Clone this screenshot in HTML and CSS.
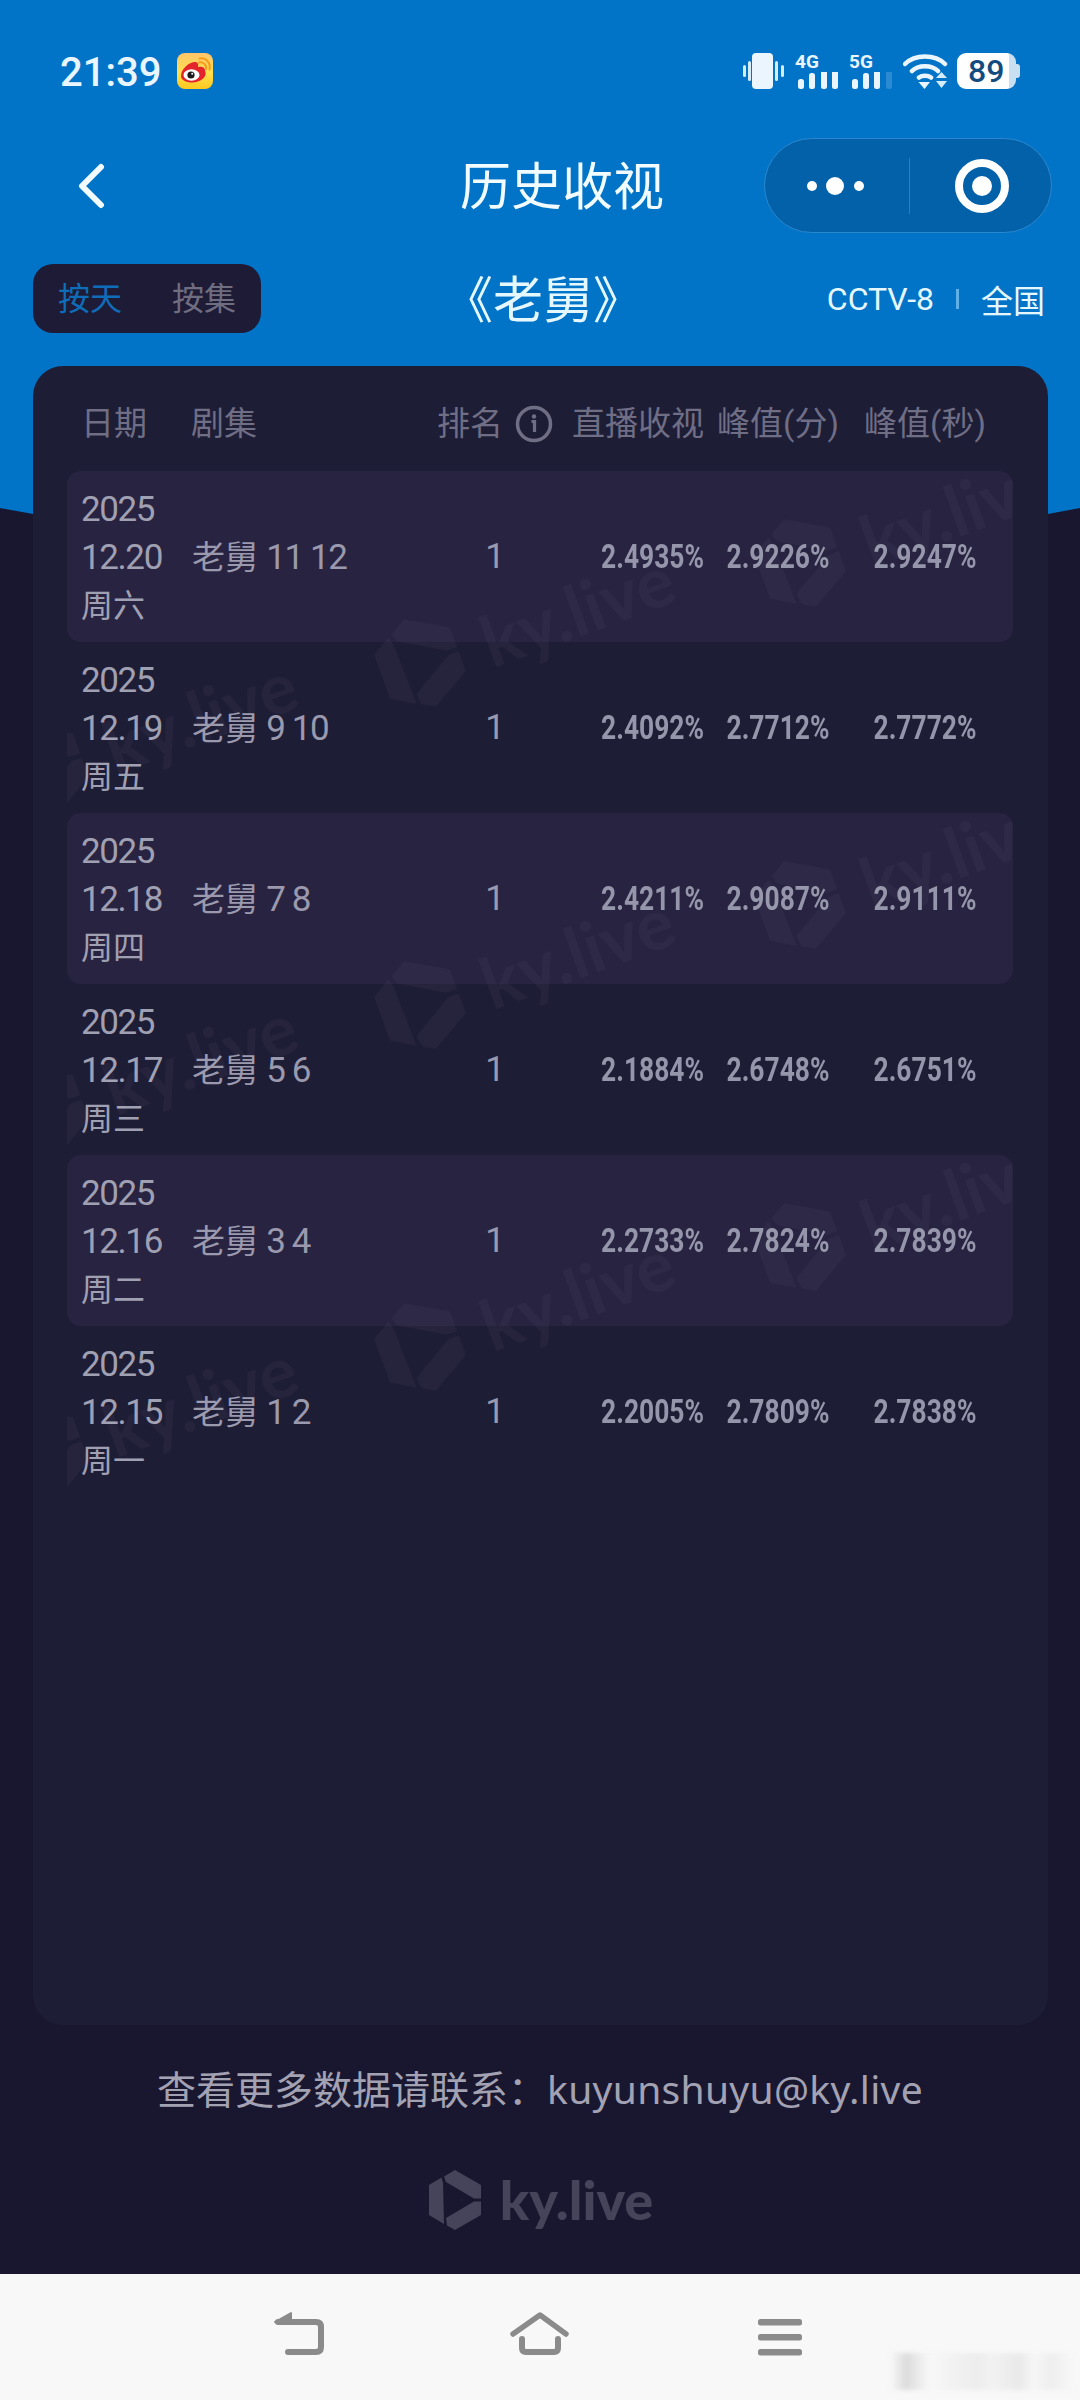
FILE: index.html
```html
<!DOCTYPE html>
<html lang="zh-CN">

<head>
  <meta charset="UTF-8">
  <meta name="viewport" content="width=device-width, initial-scale=1.0">
  <title>历史收视</title>

  <link rel="stylesheet" href="styles.css">
</head>

<body>

  <svg class="wave" width="1080" height="620" viewBox="0 0 1080 620">
    <path d="M0 0H1080V508Q540 612 0 508Z" fill="#0274c8" />
  </svg>

  <header class="statusBar">
    <span class="time">21:39</span>
    <svg class="weibo" width="36" height="36" viewBox="0 0 36 36">
      <defs>
        <linearGradient id="weiboBg" x1="0" y1="0" x2="0" y2="1">
          <stop offset="0" stop-color="#ffc56a" />
          <stop offset="0.55" stop-color="#ffe04d" />
          <stop offset="1" stop-color="#fdc81e" />
        </linearGradient>
      </defs>
      <rect width="36" height="36" rx="8" fill="url(#weiboBg)" />
      <path d="M4 23C4 16 12 9 18 9C21 9 21.500 11.500 21 14C25 13 28 14 28 17.500C31 24 23 29.500 15 29.500C9 29.500 4 27 4 23Z" fill="#e4242b" />
      <ellipse cx="14.500" cy="22" rx="8" ry="5.800" fill="#fff" />
      <circle cx="14" cy="22" r="3.600" fill="#1b1b1b" />
      <circle cx="15.200" cy="20.800" r="1" fill="#fff" />
      <path d="M22 9.500C26 8.500 30 12 29 16M22.500 5.500C29 4.500 34 10 32.500 16.500" fill="none" stroke="#f79a1d" stroke-width="2" stroke-linecap="round" />
    </svg>

    <div class="statusIcons">
      <svg width="42" height="36" viewBox="0 0 42 36">
        <rect x="9" y="0" width="21" height="36" rx="4" fill="#eaf5fd" />
        <rect x="0" y="12" width="3" height="12" rx="1.500" fill="#d5ecfb" />
        <rect x="5" y="8" width="3" height="20" rx="1.500" fill="#d5ecfb" />
        <rect x="32" y="8" width="3" height="20" rx="1.500" fill="#d5ecfb" />
        <rect x="38" y="12" width="3" height="12" rx="1.500" fill="#d5ecfb" />
      </svg>
      <div class="signal">
        <span class="netType">4G</span>
        <svg width="42" height="26" viewBox="0 0 42 26">
          <rect x="1" y="16" width="6" height="10" rx="2.500" fill="#eaf5fd" />
          <rect x="12" y="10" width="6" height="16" rx="2.500" fill="#eaf5fd" />
          <rect x="24" y="6" width="6" height="20" rx="2.500" fill="#eaf5fd" />
          <rect x="35" y="0" width="6" height="26" rx="2.500" fill="#eaf5fd" />
        </svg>
      </div>
      <div class="signal">
        <span class="netType">5G</span>
        <svg width="42" height="26" viewBox="0 0 42 26">
          <rect x="1" y="16" width="6" height="10" rx="2.500" fill="#eaf5fd" />
          <rect x="12" y="10" width="6" height="16" rx="2.500" fill="#eaf5fd" />
          <rect x="23" y="6" width="6" height="20" rx="2.500" fill="#eaf5fd" />
          <rect x="35" y="0" width="6" height="26" rx="2.500" fill="#2a8bd3" />
        </svg>
      </div>
      <svg class="wifi" width="46" height="36" viewBox="0 0 46 36">
        <path d="M2 11C12 1 32 1 42 11M9 18C15 11.500 29 11.500 35 18M16 24.500C19 22 25 22 28 24.500" fill="none" stroke="#eaf5fd" stroke-width="4.500" stroke-linecap="round" />
        <path d="M15.500 29H27L21.500 36Z" fill="#eaf5fd" />
        <path d="M33 25L38.500 19L44 25ZM33 28H44L38.500 35Z" fill="#d5ecfb" />
      </svg>
      <div class="battery">
        <span class="batteryNum">89</span>
      </div>
    </div>
  </header>

  <nav class="navBar">
    <svg class="backBtn" width="30" height="46" viewBox="0 0 30 46">
      <path d="M25 4L6 23L25 42" fill="none" stroke="#f4fbff" stroke-width="6" stroke-linecap="round" stroke-linejoin="round" />
    </svg>
    <h1 class="pageTitle">历史收视</h1>
    <div class="capsule">
      <svg class="capsuleMore" width="62" height="20" viewBox="0 0 62 20">
        <circle cx="6" cy="10" r="5" fill="#fff" />
        <circle cx="29" cy="10" r="9" fill="#fff" />
        <circle cx="53" cy="10" r="5" fill="#fff" />
      </svg>
      <span class="capsuleLine"></span>
      <svg class="capsuleClose" width="56" height="56" viewBox="0 0 56 56">
        <circle cx="28" cy="28" r="23" fill="none" stroke="#fff" stroke-width="8" />
        <circle cx="28" cy="28" r="10" fill="#fff" />
      </svg>
    </div>
  </nav>

  <section class="filterBar">
    <div class="toggle">
      <span class="toggleOn">按天</span>
      <span class="toggleOff">按集</span>
    </div>
    <h2 class="showName">《老舅》</h2>
    <div class="channel">
      <span>CCTV-8</span>
      <span class="channelLine"></span>
      <span>全国</span>
    </div>
  </section>

  <main class="card">
    <div class="tableHead">
      <span>日期</span>
      <span>剧集</span>
      <span class="rankHead">排名
        <svg width="38" height="38" viewBox="0 0 38 38">
          <circle cx="19" cy="19" r="16.500" fill="none" stroke="#6f6e85" stroke-width="3.500" />
          <circle cx="19" cy="11.500" r="2.200" fill="#6f6e85" />
          <path d="M16.500 16.500H19.500V27" fill="none" stroke="#6f6e85" stroke-width="3.200" />
        </svg>
      </span>
      <span class="alignRight">直播收视</span>
      <span class="alignCenter">峰值(分)</span>
      <span class="alignCenter">峰值(秒)</span>
    </div>

    <div class="rows">
      <div class="row">
        <div class="date"><span>2025</span><span>12.20</span><span class="weekday">周六</span></div>
        <div class="episode">老舅 <span class="epNum">11 12</span></div>
        <div class="rank">1</div>
        <div class="num alignRight">2.4935%</div>
        <div class="num alignCenter">2.9226%</div>
        <div class="num alignCenter">2.9247%</div>
      </div>
      <div class="row">
        <div class="date"><span>2025</span><span>12.19</span><span class="weekday">周五</span></div>
        <div class="episode">老舅 <span class="epNum">9 10</span></div>
        <div class="rank">1</div>
        <div class="num alignRight">2.4092%</div>
        <div class="num alignCenter">2.7712%</div>
        <div class="num alignCenter">2.7772%</div>
      </div>
      <div class="row">
        <div class="date"><span>2025</span><span>12.18</span><span class="weekday">周四</span></div>
        <div class="episode">老舅 <span class="epNum">7 8</span></div>
        <div class="rank">1</div>
        <div class="num alignRight">2.4211%</div>
        <div class="num alignCenter">2.9087%</div>
        <div class="num alignCenter">2.9111%</div>
      </div>
      <div class="row">
        <div class="date"><span>2025</span><span>12.17</span><span class="weekday">周三</span></div>
        <div class="episode">老舅 <span class="epNum">5 6</span></div>
        <div class="rank">1</div>
        <div class="num alignRight">2.1884%</div>
        <div class="num alignCenter">2.6748%</div>
        <div class="num alignCenter">2.6751%</div>
      </div>
      <div class="row">
        <div class="date"><span>2025</span><span>12.16</span><span class="weekday">周二</span></div>
        <div class="episode">老舅 <span class="epNum">3 4</span></div>
        <div class="rank">1</div>
        <div class="num alignRight">2.2733%</div>
        <div class="num alignCenter">2.7824%</div>
        <div class="num alignCenter">2.7839%</div>
      </div>
      <div class="row">
        <div class="date"><span>2025</span><span>12.15</span><span class="weekday">周一</span></div>
        <div class="episode">老舅 <span class="epNum">1 2</span></div>
        <div class="rank">1</div>
        <div class="num alignRight">2.2005%</div>
        <div class="num alignCenter">2.7809%</div>
        <div class="num alignCenter">2.7838%</div>
      </div>

      <!-- tilted ky.live marks over the rows -->
      <svg class="watermark" width="946" height="1026" viewBox="0 0 946 1026" aria-hidden="true">
        <defs>
          <g id="kyMark">
            <path d="M-9 -18L-11 -23.500L0 -30L26 -15V-1.500L19 -1.500Z" />
            <path d="M19 1.500L26 1.500V15L0 30L-8 25.500L-9 18Z" />
            <path d="M-13.500 -22.500L-26 -15V15L-11 24L-12 -17Z" />
          </g>
          <g id="kyStamp">
            <g transform="rotate(-20) scale(1.55)"><use href="#kyMark" /></g>
            <text class="watermarkText" transform="rotate(-20)" x="66" y="30">ky.live</text>
          </g>
        </defs>
        <g class="watermarkInk">
          <use href="#kyStamp" x="-24" y="298" />
          <use href="#kyStamp" x="-24" y="640" />
          <use href="#kyStamp" x="-24" y="982" />
          <use href="#kyStamp" x="353" y="192" />
          <use href="#kyStamp" x="353" y="534" />
          <use href="#kyStamp" x="353" y="876" />
          <use href="#kyStamp" x="733" y="92" />
          <use href="#kyStamp" x="733" y="434" />
          <use href="#kyStamp" x="733" y="776" />
        </g>
      </svg>
    </div>
  </main>

  <footer class="pageFoot">
    <p class="contact">查看更多数据请联系：<span class="contactMail">kuyunshuyu@ky.live</span></p>
    <div class="footLogo">
      <svg width="56" height="62" viewBox="-28 -31 56 62" fill="#45445a">
        <use href="#kyMark" />
      </svg>
      <span>ky.live</span>
    </div>
  </footer>

  <div class="sysNav">
    <svg width="60" height="50" viewBox="0 0 60 50">
      <path d="M8 12H46Q51 12 51 17V37Q51 42 46 42H18" fill="none" stroke="#8b8b8b" stroke-width="6" stroke-linecap="round" />
      <path d="M5 12L21 3V14Z" fill="#8b8b8b" stroke="#8b8b8b" stroke-width="2" stroke-linejoin="round" />
    </svg>
    <svg width="60" height="50" viewBox="0 0 60 50">
      <path d="M3 24L30 5L56 24" fill="none" stroke="#8b8b8b" stroke-width="5.500" stroke-linecap="round" stroke-linejoin="round" />
      <path d="M12 29V38Q12 42 16 42H44Q48 42 48 38V29" fill="none" stroke="#8b8b8b" stroke-width="6" stroke-linecap="round" />
    </svg>
    <svg width="60" height="50" viewBox="0 0 60 50">
      <rect x="8" y="9" width="44" height="6.500" rx="2.500" fill="#8b8b8b" />
      <rect x="8" y="24" width="44" height="6.500" rx="2.500" fill="#8b8b8b" />
      <rect x="8" y="39" width="44" height="6.500" rx="2.500" fill="#8b8b8b" />
    </svg>
    <div class="smudge"></div>
  </div>

</body>

</html>
```

FILE: styles.css
```css
* {
  box-sizing: border-box;
}

body {
  position: relative;
  width: 1080px;
  height: 2400px;
  margin: 0;
  overflow: hidden;
  background-color: #191730;
  font-family: Roboto, "Noto Sans CJK SC", sans-serif;
  font-size: 32px;
  display: flex;
  flex-direction: column;
}

h1,
h2,
p {
  margin: 0;
  font-weight: 400;
}

.wave {
  position: absolute;
  top: 0;
  left: 0;
}

/* status bar */
.statusBar {
  position: relative;
  display: flex;
  align-items: center;
  height: 36px;
  margin-top: 53px;
  padding: 0 64px 0 60px;
}

.time {
  width: 117px;
  padding-top: 2px;
  font-size: 40px;
  font-weight: 500;
  color: #eaf6ff;
}

.statusIcons {
  display: flex;
  align-items: flex-end;
  margin-left: auto;
}

.signal {
  position: relative;
  width: 42px;
  height: 36px;
  margin-left: 12px;
  display: flex;
  align-items: flex-end;
}

.signal + .signal {
  margin-left: 12px;
}

.netType {
  position: absolute;
  top: 0;
  left: -2px;
  font-size: 19px;
  line-height: 18px;
  font-weight: 700;
  color: #eaf5fd;
}

.signal svg {
  clip-path: inset(9px 0 0 0);
}

.wifi {
  margin-left: 10px;
}

.battery {
  position: relative;
  width: 59px;
  height: 36px;
  margin-left: 8px;
  background: linear-gradient(to right, #fff 0, #fff 88%, #c9dff2 88%);
  border-radius: 9px;
  display: flex;
  align-items: center;
  padding-left: 11px;
}

.battery::after {
  content: "";
  position: absolute;
  right: -4px;
  top: 11px;
  width: 4px;
  height: 14px;
  border-radius: 0 3px 3px 0;
  background-color: #c9dff2;
}

.batteryNum {
  font-size: 32px;
  font-weight: 500;
  color: #134b7e;
}

/* title bar */
.navBar {
  position: relative;
  display: flex;
  align-items: center;
  height: 95px;
  margin-top: 49px;
  padding: 0 28px 0 76px;
}

.pageTitle {
  margin-left: 354px;
  padding-top: 4px;
  font-size: 51px;
  line-height: 1;
  color: #f2fbff;
}

.capsule {
  display: flex;
  align-items: center;
  width: 288px;
  height: 95px;
  margin-left: auto;
  border: 1px solid #2a88cf;
  border-radius: 48px;
  background-color: #0261a8;
}

.capsuleMore {
  margin-left: 41px;
}

.capsuleLine {
  width: 1px;
  height: 56px;
  margin-left: 41px;
  background-color: #2a7fc2;
}

.capsuleClose {
  margin-left: 44px;
}

/* filter row */
.filterBar {
  position: relative;
  display: flex;
  align-items: center;
  height: 69px;
  margin-top: 31px;
  padding: 0 35px 0 33px;
}

.toggle {
  display: flex;
  align-items: center;
  gap: 50px;
  width: 228px;
  height: 69px;
  padding-left: 25px;
  border-radius: 20px;
  background-color: #1e1b36;
  line-height: 1;
}

.toggleOn {
  color: #0f6cb8;
}

.toggleOff {
  color: #6f6d80;
}

.showName {
  margin-left: 182px;
  padding-top: 4px;
  font-size: 50px;
  line-height: 1;
  color: #e6f8ff;
}

.channel {
  display: flex;
  align-items: center;
  margin-left: auto;
  color: #e6f8ff;
}

.channelLine {
  width: 3px;
  height: 20px;
  margin: 0 22px;
  background-color: #5fb0e6;
}

/* table card */
.card {
  position: relative;
  width: 1015px;
  height: 1659px;
  margin: 33px 0 0 33px;
  padding: 34px 35px 0 34px;
  border-radius: 30px;
  background-color: #1e1d36;
}

.tableHead,
.row {
  display: grid;
  grid-template-columns: 110px 239px 130px 144px 148px 146px;
  padding: 0 15px 0 14px;
}

.tableHead {
  height: 71px;
  font-size: 33px;
  line-height: 48px;
  color: #6f6e85;
  white-space: nowrap;
}

.rankHead {
  display: flex;
  align-items: center;
  justify-content: center;
  gap: 12px;
  height: 48px;
}

.alignRight {
  text-align: right;
}

.alignCenter {
  text-align: center;
}

.rows {
  position: relative;
}

.row {
  align-items: center;
  height: 171px;
  border-radius: 14px;
  color: #9a99ad;
}

.row:nth-child(odd) {
  background-color: #282340;
}

.date {
  display: flex;
  flex-direction: column;
  padding-top: 3px;
  font-size: 35px;
  line-height: 48px;
  letter-spacing: -1.400px;
  color: #a0a0b3;
}

.weekday {
  font-size: 32px;
  letter-spacing: 0;
}

.episode {
  padding: 0 0 4px 1px;
  font-size: 33px;
  white-space: nowrap;
}

.epNum {
  font-size: 35px;
  letter-spacing: -1.400px;
}

.rank {
  text-align: center;
  font-size: 35px;
}

/* the reference digits are a condensed face, none is installed */
.num {
  font-size: 33px;
  font-weight: 700;
  color: #9596ab;
  white-space: nowrap;
  transform: scaleX(0.8);
}

.num.alignRight {
  transform-origin: right center;
}

.num.alignCenter {
  transform-origin: center;
}

.watermark {
  position: absolute;
  top: 0;
  left: 0;
  pointer-events: none;
}

.watermarkInk {
  fill: #fff;
  opacity: 0.035;
}

.watermarkText {
  font-family: Lato, sans-serif;
  font-size: 71px;
  font-weight: 700;
}

/* footer */
.pageFoot {
  display: flex;
  flex-direction: column;
  align-items: center;
  height: 249px;
  padding-top: 39px;
}

.contact {
  font-size: 39px;
  line-height: 50px;
  color: #a3a2b3;
}

.contactMail {
  font-family: "Noto Sans", sans-serif;
  letter-spacing: 0.300px;
}

.footLogo {
  display: flex;
  align-items: center;
  gap: 17px;
  margin-top: 53px;
  color: #45445a;
}

.footLogo span {
  font-family: Lato, sans-serif;
  font-size: 54px;
  font-weight: 900;
  line-height: 62px;
}

/* system navigation */
.sysNav {
  position: relative;
  display: flex;
  justify-content: center;
  gap: 180px;
  height: 126px;
  padding-top: 36px;
  background-color: #f8f8f8;
}

.smudge {
  position: absolute;
  top: 79px;
  left: 890px;
  width: 184px;
  height: 37px;
  filter: blur(2px);
  background: linear-gradient(to right, #f8f8f8 0, #dcdcdc 9%, #ececec 16%, #f8f8f8 22%, #f1f1f1 35%, #ededed 48%, #f2f2f2 56%, #e9e9e9 70%, #f6f6f6 78%, #eeeeee 88%, #f8f8f8 100%);
}
```
